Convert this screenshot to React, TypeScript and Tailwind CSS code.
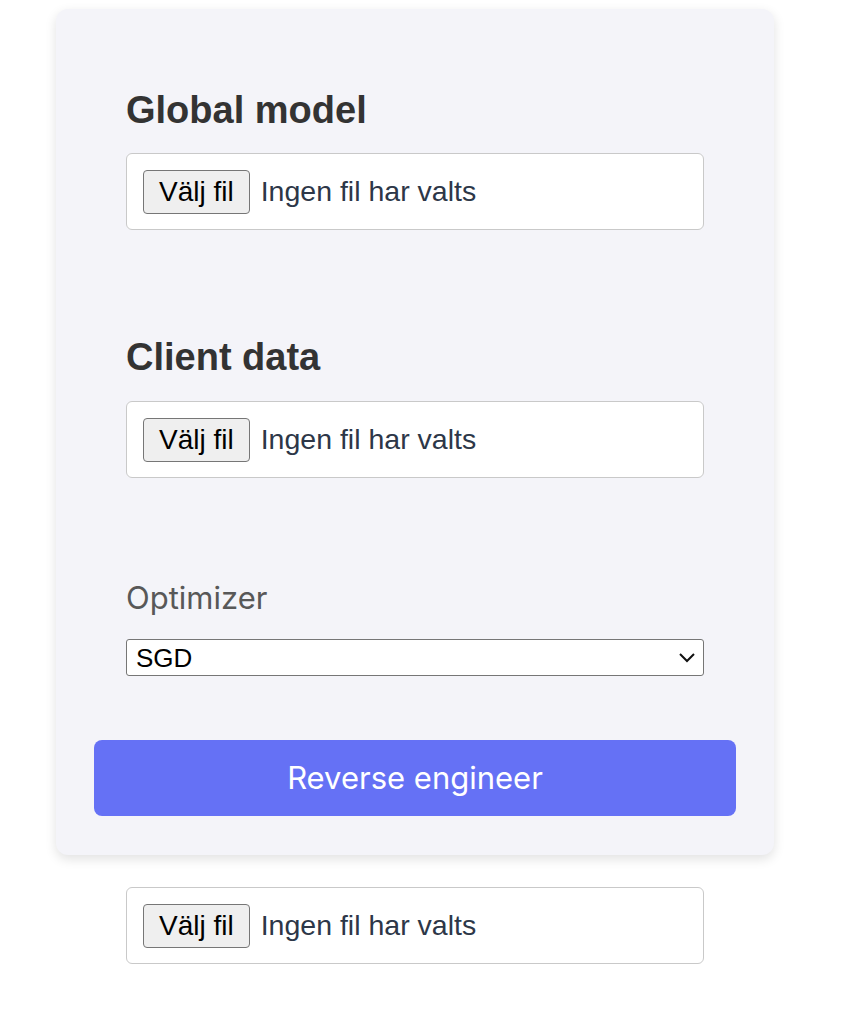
import { useState } from "react";

const FileField = () => (
  <div className="flex items-center rounded-md border border-[#c9c9c9] bg-white px-4 py-[15.5px]">
    <button
      type="button"
      className="h-[44px] rounded-[4px] border border-[#767676] bg-[#efefef] px-[15px] text-[28px] leading-none text-black"
      style={{ fontFamily: '"Liberation Sans", Arial, sans-serif' }}
    >
      Välj fil
    </button>
    <span
      className="ml-[11px] text-[28.5px] text-[#2d3748]"
      style={{ fontFamily: '"Liberation Sans", Arial, sans-serif' }}
    >
      Ingen fil har valts
    </span>
  </div>
);

export default function App() {
  const [optimizer, setOptimizer] = useState("SGD");

  return (
    <div className="min-h-screen bg-white pt-[9px] font-['Liberation_Sans',Arial,sans-serif]">
      <div className="ml-[56px] w-[718px] rounded-xl bg-[#f4f4f9] px-[38px] pt-[80px] pb-[39px] shadow-[0_4px_12px_rgba(0,0,0,0.12)]">
        <div className="px-8">
          <h2 className="text-[38px] font-bold leading-[42px] text-[#333333]">Global model</h2>
          <div className="mt-[22px]">
            <FileField />
          </div>

          <h2 className="mt-[106px] text-[38px] font-bold leading-[42px] text-[#333333]">Client data</h2>
          <div className="mt-[23px]">
            <FileField />
          </div>

          <label className="mt-[101px] block font-['Inter',sans-serif] text-[31px] leading-[38px] text-[#585858]">
            Optimizer
          </label>
          <div className="relative mt-[22px]">
            <select
              value={optimizer}
              onChange={(e) => setOptimizer(e.target.value)}
              className="h-[37px] w-full appearance-none rounded-[3px] border border-[#767676] bg-white pl-[9px] text-[26px] leading-none text-black outline-none"
            >
              <option>SGD</option>
              <option>Adam</option>
            </select>
            <svg
              className="pointer-events-none absolute right-[8px] top-[12px] h-[14px] w-[18px]"
              viewBox="0 0 18 14"
              fill="none"
              stroke="#111"
              strokeWidth="2"
            >
              <polyline points="2,3 9,10 16,3" />
            </svg>
          </div>
        </div>

        <button
          type="button"
          className="mt-[64px] h-[76px] w-full rounded-lg bg-[#6571f5] font-['Inter',sans-serif] text-[31px] text-white"
        >
          Reverse engineer
        </button>
      </div>

      <div className="ml-[126px] mt-[32px] w-[578px]">
        <FileField />
      </div>
    </div>
  );
}
